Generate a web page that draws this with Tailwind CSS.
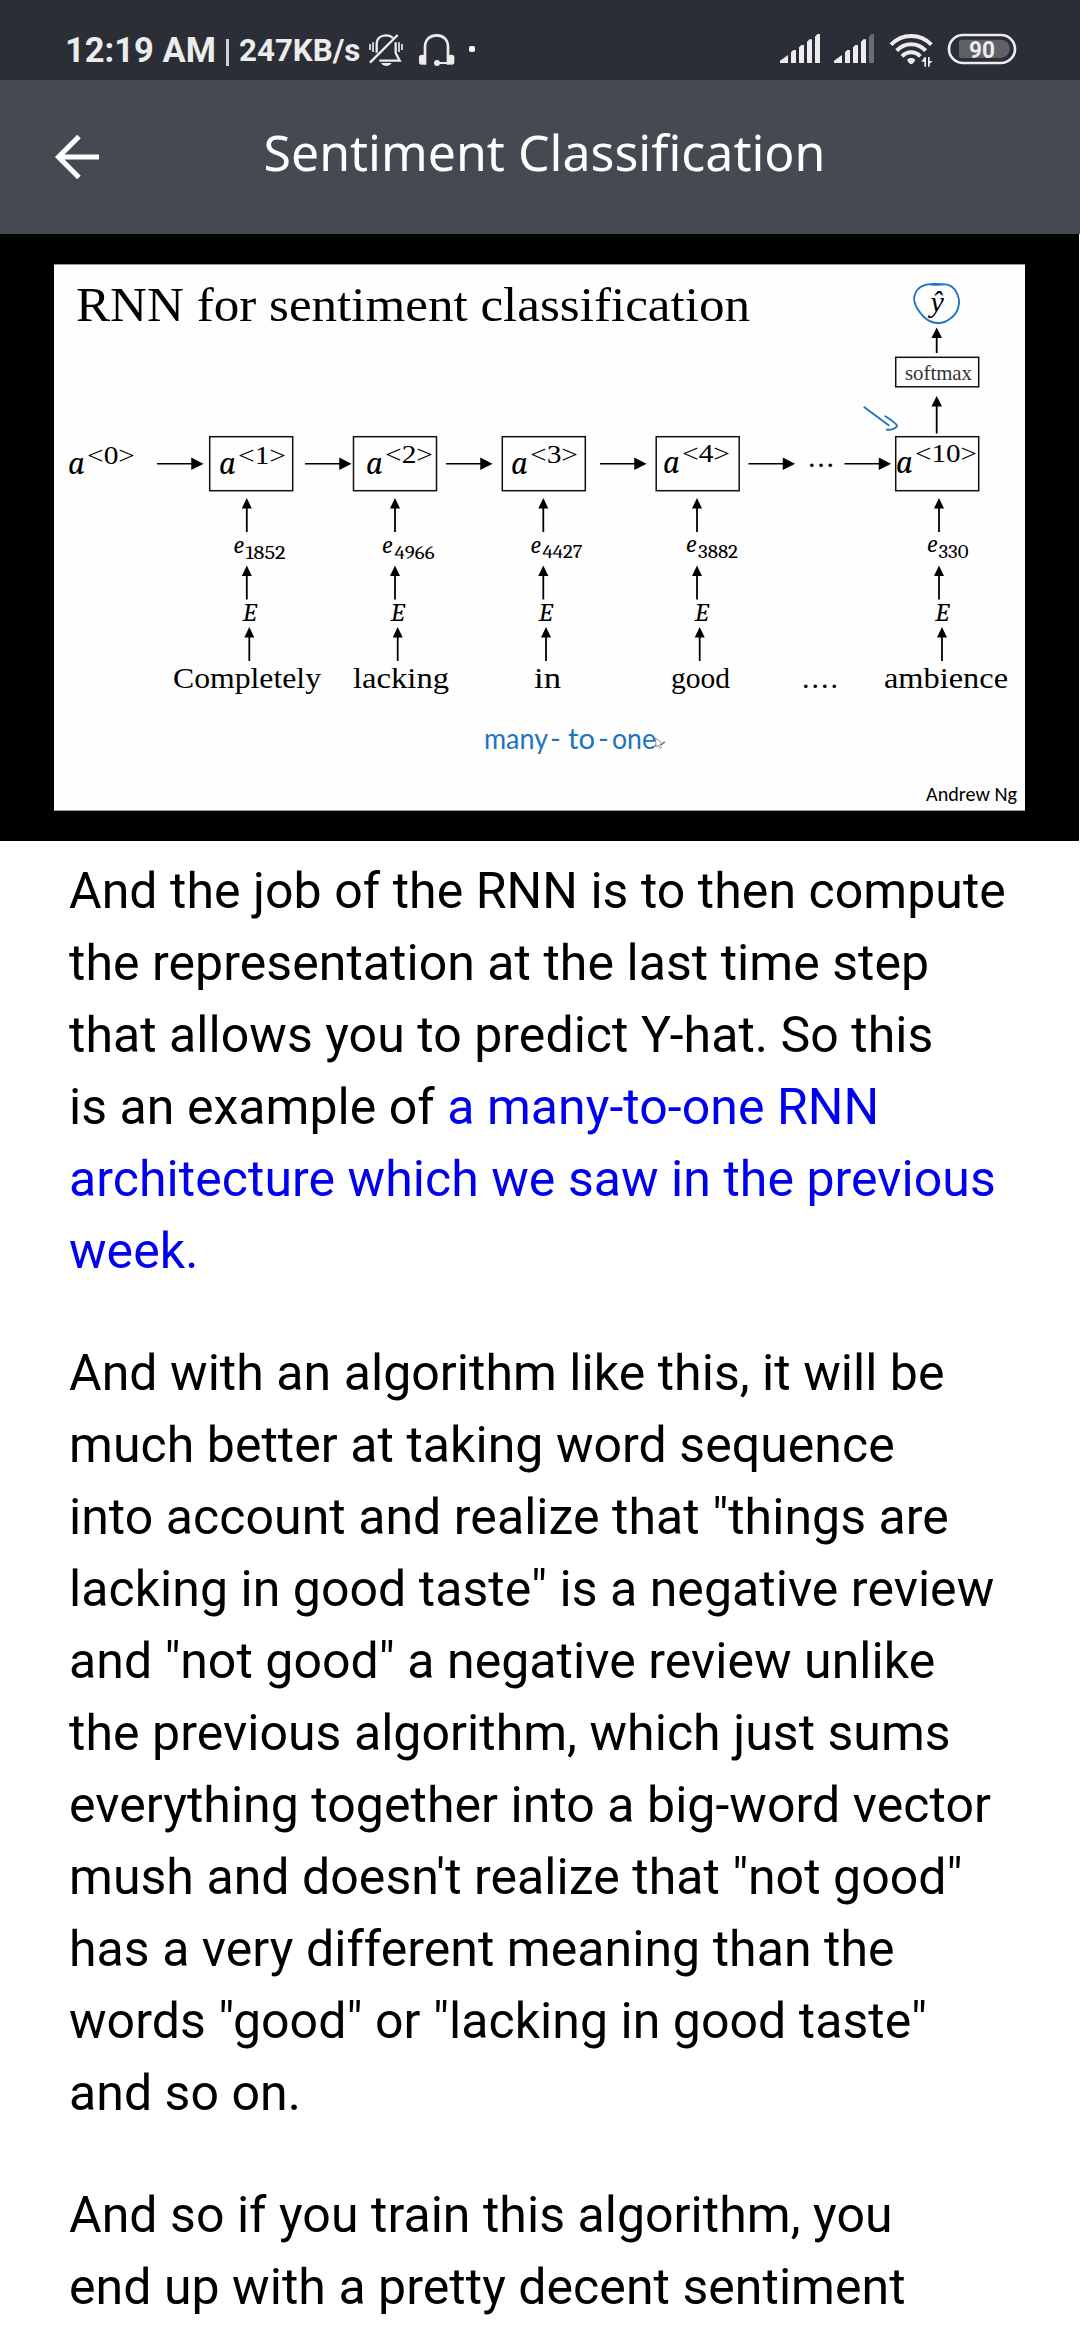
<!DOCTYPE html>
<html lang="en">
<head>
<meta charset="utf-8">
<title>Sentiment Classification</title>
<script src="https://cdn.jsdelivr.net/npm/@tailwindcss/browser@4"></script>
</head>
<body class="flex h-[2340px] w-[1080px] flex-col overflow-hidden bg-white font-[Roboto,sans-serif] text-black">

  <!-- Status bar -->
  <div class="flex h-20 w-full shrink-0 justify-between bg-[#2b2e36] text-[#ececec]">
    <div class="flex pl-[65px] pt-[25px]">
      <span class="w-[161px] pt-[5px] text-[34.5px]/[40px] font-bold whitespace-nowrap">12:19 AM</span>
      <span class="mt-[14px] h-[27px] w-[3px] bg-[#d0d0d0]"></span>
      <span class="w-[131px] pt-[6px] pl-[10px] text-[31.3px]/[40px] font-bold whitespace-nowrap">247KB/s</span>
      <svg class="h-[50px] w-[130px]" viewBox="0 0 390 150" fill="none" stroke="#ececec" stroke-width="7">
        <path d="M50 83V58C50 40 62 31 78 31C87 31 94 34 99 39M107 52V84L119 107H58"/>
        <path d="M113 30L30 113" stroke-width="7"/>
        <path d="M63 114H95C90 121 85 123 79 123C73 123 68 121 63 114Z" fill="#ececec" stroke="none"/>
        <path d="M30 57V75M39 52V81M117 52V81M126 57V75" stroke-width="5"/>
        <path d="M195 119V66C195 43 211 31 230 31C249 31 264 43 264 66V119" stroke-width="8"/>
        <path d="M232 114H266" stroke-width="6"/>
        <circle cx="231" cy="114" r="9" fill="#ececec" stroke="none"/>
        <rect x="177" y="89" width="19" height="30" rx="8" fill="#ececec" stroke="none"/>
        <rect x="264" y="89" width="19" height="30" rx="8" fill="#ececec" stroke="none"/>
        <rect x="327" y="63" width="18" height="18" rx="6" fill="#fff" stroke="none"/>
      </svg>
    </div>
    <svg class="mt-[25px] mr-[50px] h-[50px] w-[260px]" viewBox="0 0 780 150" fill="#ececec">
      <path d="M30 114V107L54 90V114ZM63 114V82L70 75H78V114ZM87 114V67L94 60H102V114ZM111 114V51L118 43H126V114ZM135 114V35L142 27H150V114Z"/>
      <path d="M192 114V107L216 90V114ZM225 114V82L232 75H240V114ZM249 114V67L256 60H264V114ZM273 114V51L280 43H288V114Z"/>
      <path d="M297 114V35L304 27H312V114Z" fill="#6b6d72"/>
      <g fill="none" stroke="#ececec" stroke-width="12">
        <path d="M363 59C396 24 451 24 484 59"/>
        <path d="M380 77C404 51 443 51 467 77"/>
        <path d="M396 94C412 78 435 78 451 94"/>
      </g>
      <path d="M411 105C417 97 430 97 436 105L430 114Q423 121 417 114Z"/>
      <path d="M463 97H468V125H463V110H454ZM474 125V96H479V108H488L479 116V125Z"/>
      <rect x="537" y="30" width="198" height="84" rx="42" fill="none" stroke="#ececec" stroke-width="8"/>
      <path d="M572 44H692A27 27 0 0 1 692 99H572Q567 99 567 94V49Q567 44 572 44Z" fill="#5f6167"/>
      <text x="597" y="98" font-family="Roboto" font-weight="700" font-size="71" textLength="78" lengthAdjust="spacingAndGlyphs">90</text>
    </svg>
  </div>

  <!-- App bar -->
  <header class="flex h-[154px] w-full shrink-0 bg-[#444952] text-white">
    <svg class="ml-[54px] mt-[54px] h-[46px] w-[46px]" viewBox="0 0 46 46" fill="none" stroke="#fff" stroke-width="5">
      <path d="M45 23H5M25 2.500L4.500 23L25 43.500"/>
    </svg>
    <h1 class="ml-[163.5px] pt-[38px] font-['Noto_Sans',sans-serif] text-[50px]/[68px] whitespace-nowrap">Sentiment Classification</h1>
  </header>

  <!-- Lecture slide -->
  <figure class="h-[607px] w-[1079px] shrink-0 bg-black">
    <svg class="h-[607px] w-[1079px]" viewBox="0 234 1079 607">
      <defs>
        <path id="right" d="M0 0H36M45 0L35 -5V5Z" stroke="#000" stroke-width="1.500"/>
        <g id="up"><path d="M0 33V8" stroke="#000" stroke-width="1.800"/><path d="M0 -1L-5 9.500H5Z"/></g>
      </defs>
      <rect x="54" y="264" width="971" height="547" fill="#fefefe"/>
      <path d="M54 264.500H1025M54 810.500H1025" stroke="#999"/>

      <g fill="none" stroke="#111" stroke-width="1.500">
        <rect x="209.700" y="436.700" width="83" height="54"/>
        <rect x="353.500" y="436.700" width="83" height="54"/>
        <rect x="502.300" y="436.700" width="83" height="54"/>
        <rect x="656.200" y="436.700" width="83" height="54"/>
        <rect x="895.700" y="436.700" width="83" height="54"/>
        <rect x="895.700" y="357.300" width="83" height="29.500"/>
      </g>

      <use href="#right" x="157" y="463.800"/>
      <use href="#right" x="305" y="463.800"/>
      <use href="#right" x="446" y="463.800"/>
      <use href="#right" x="600" y="463.800"/>
      <use href="#right" x="748.500" y="463.800"/>
      <use href="#right" x="844.500" y="463.800"/>

      <use href="#up" x="246.800" y="499"/><use href="#up" x="395" y="499"/><use href="#up" x="543.300" y="499"/><use href="#up" x="697" y="499"/><use href="#up" x="939" y="499"/>
      <use href="#up" x="246.800" y="566.500"/><use href="#up" x="395" y="566.500"/><use href="#up" x="543.300" y="566.500"/><use href="#up" x="697" y="566.500"/><use href="#up" x="939" y="566.500"/>
      <use href="#up" x="249.300" y="628"/><use href="#up" x="397.700" y="628"/><use href="#up" x="546" y="628"/><use href="#up" x="699.700" y="628"/><use href="#up" x="942" y="628"/>
      <path d="M936.700 353V336M936.700 433.500V404" stroke="#000" stroke-width="1.800"/>
      <path d="M936.700 327.500L931.500 338H942ZM936.700 396L931.500 406.500H942Z"/>

      <g font-family="'Century Schoolbook','Liberation Serif',serif">
        <text x="76" y="321" font-size="48" textLength="674" lengthAdjust="spacingAndGlyphs">RNN for sentiment classification</text>
        <text x="905" y="379.500" font-size="22" fill="#333" textLength="67" lengthAdjust="spacingAndGlyphs">softmax</text>
        <g font-size="30">
          <text x="173" y="687.700" textLength="148" lengthAdjust="spacingAndGlyphs">Completely</text>
          <text x="353" y="687.700" textLength="96" lengthAdjust="spacingAndGlyphs">lacking</text>
          <text x="534" y="687.700" textLength="27" lengthAdjust="spacingAndGlyphs">in</text>
          <text x="671" y="687.700" textLength="59" lengthAdjust="spacingAndGlyphs">good</text>
          <text x="802" y="687.700" textLength="36" lengthAdjust="spacing">....</text>
          <text x="884" y="687.700" textLength="124" lengthAdjust="spacingAndGlyphs">ambience</text>
          <text x="808" y="467" textLength="26" lengthAdjust="spacing">...</text>
        </g>
      </g>

      <g font-family="Caladea,Cambria,'Liberation Serif',serif">
        <g font-size="33" font-style="italic">
          <text x="68" y="474">a</text><text x="219" y="474">a</text><text x="366" y="474">a</text><text x="511" y="473.500">a</text><text x="663" y="473">a</text><text x="896" y="473">a</text>
        </g>
        <g font-size="25" font-family="'Liberation Serif',serif">
          <text x="87" y="463.500" textLength="48" lengthAdjust="spacingAndGlyphs">&lt;0&gt;</text>
          <text x="238" y="463.500" textLength="48" lengthAdjust="spacingAndGlyphs">&lt;1&gt;</text>
          <text x="385" y="462.800" textLength="48" lengthAdjust="spacingAndGlyphs">&lt;2&gt;</text>
          <text x="530" y="462.800" textLength="48" lengthAdjust="spacingAndGlyphs">&lt;3&gt;</text>
          <text x="682" y="462" textLength="48" lengthAdjust="spacingAndGlyphs">&lt;4&gt;</text>
          <text x="915" y="461.500" textLength="62" lengthAdjust="spacingAndGlyphs">&lt;10&gt;</text>
        </g>
        <g font-size="24" font-style="italic">
          <text x="233.500" y="552.700">e</text><text x="382" y="552.700">e</text><text x="530.500" y="552.700">e</text><text x="686" y="552.300">e</text><text x="927" y="552">e</text>
          <text x="242.500" y="621.300" textLength="14" lengthAdjust="spacingAndGlyphs">E</text><text x="390.500" y="621.300" textLength="14" lengthAdjust="spacingAndGlyphs">E</text><text x="538.500" y="621.300" textLength="14" lengthAdjust="spacingAndGlyphs">E</text><text x="694.500" y="621.300" textLength="14" lengthAdjust="spacingAndGlyphs">E</text><text x="935" y="620.700" textLength="14" lengthAdjust="spacingAndGlyphs">E</text>
        </g>
        <g font-size="18">
          <text x="245.500" y="558.500" textLength="40" lengthAdjust="spacingAndGlyphs">1852</text>
          <text x="394.500" y="558.500" textLength="40" lengthAdjust="spacingAndGlyphs">4966</text>
          <text x="542.500" y="558" textLength="40" lengthAdjust="spacingAndGlyphs">4427</text>
          <text x="698" y="558" textLength="40" lengthAdjust="spacingAndGlyphs">3882</text>
          <text x="938.500" y="557.700" textLength="30" lengthAdjust="spacingAndGlyphs">330</text>
        </g>
        <text x="930.500" y="312" font-size="30" font-style="italic" font-family="'Liberation Serif',serif">ŷ</text>
      </g>

      <text x="926" y="801" font-size="20" font-family="Carlito,'Open Sans',sans-serif" textLength="91" lengthAdjust="spacingAndGlyphs">Andrew Ng</text>

      <!-- Pen annotations -->
      <g transform="translate(760 250) scale(.33333)" fill="none" stroke="#2272bd" stroke-width="5.500" stroke-linecap="round" stroke-linejoin="round">
        <path d="M553 103C515 99 478 100 466 130C456 151 468 176 492 201C515 224 548 224 569 207C596 190 600 160 596 145C590 121 577 108 563 104C550 101 530 108 512 103"/>
        <path d="M313 472L386 526M376 499C390 508 408 520 411 527C410 535 395 540 380 539"/>
      </g>
      <text y="749" font-size="29" font-family="Lato,sans-serif" fill="#2272bd"><tspan x="484" textLength="64" lengthAdjust="spacingAndGlyphs">many</tspan><tspan x="550">-</tspan><tspan x="568" textLength="27" lengthAdjust="spacingAndGlyphs">to</tspan><tspan x="598">-</tspan><tspan x="612" textLength="44" lengthAdjust="spacingAndGlyphs">one</tspan></text>
      <path d="M655 745Q660 746 665 742" fill="none" stroke="#2272bd" stroke-width="1.500"/>
      <path d="M655.500 738L656 747L658 745L660 748.500L661.500 747.500L660 744H663Z" fill="#fff" stroke="#777" stroke-width=".8"/>
    </svg>
  </figure>

  <!-- Transcript -->
  <article class="flex flex-col gap-[50px] pt-[14px] pl-[69px] text-[50px]/[72px] tracking-[0.05px] whitespace-nowrap">
    <p>And the job of the RNN is to then compute<br>the representation at the last time step<br>that allows you to predict Y-hat. So this<br>is an example of <span class="text-[#0000ee]">a many-to-one RNN<br>architecture which we saw in the previous<br>week.</span></p>
    <p>And with an algorithm like this, it will be<br>much better at taking word sequence<br>into account and realize that "things are<br>lacking in good taste" is a negative review<br>and "not good" a negative review unlike<br>the previous algorithm, which just sums<br>everything together into a big-word vector<br>mush and doesn't realize that "not good"<br>has a very different meaning than the<br>words "good" or "lacking in good taste"<br>and so on.</p>
    <p>And so if you train this algorithm, you<br>end up with a pretty decent sentiment</p>
  </article>
</body>
</html>
